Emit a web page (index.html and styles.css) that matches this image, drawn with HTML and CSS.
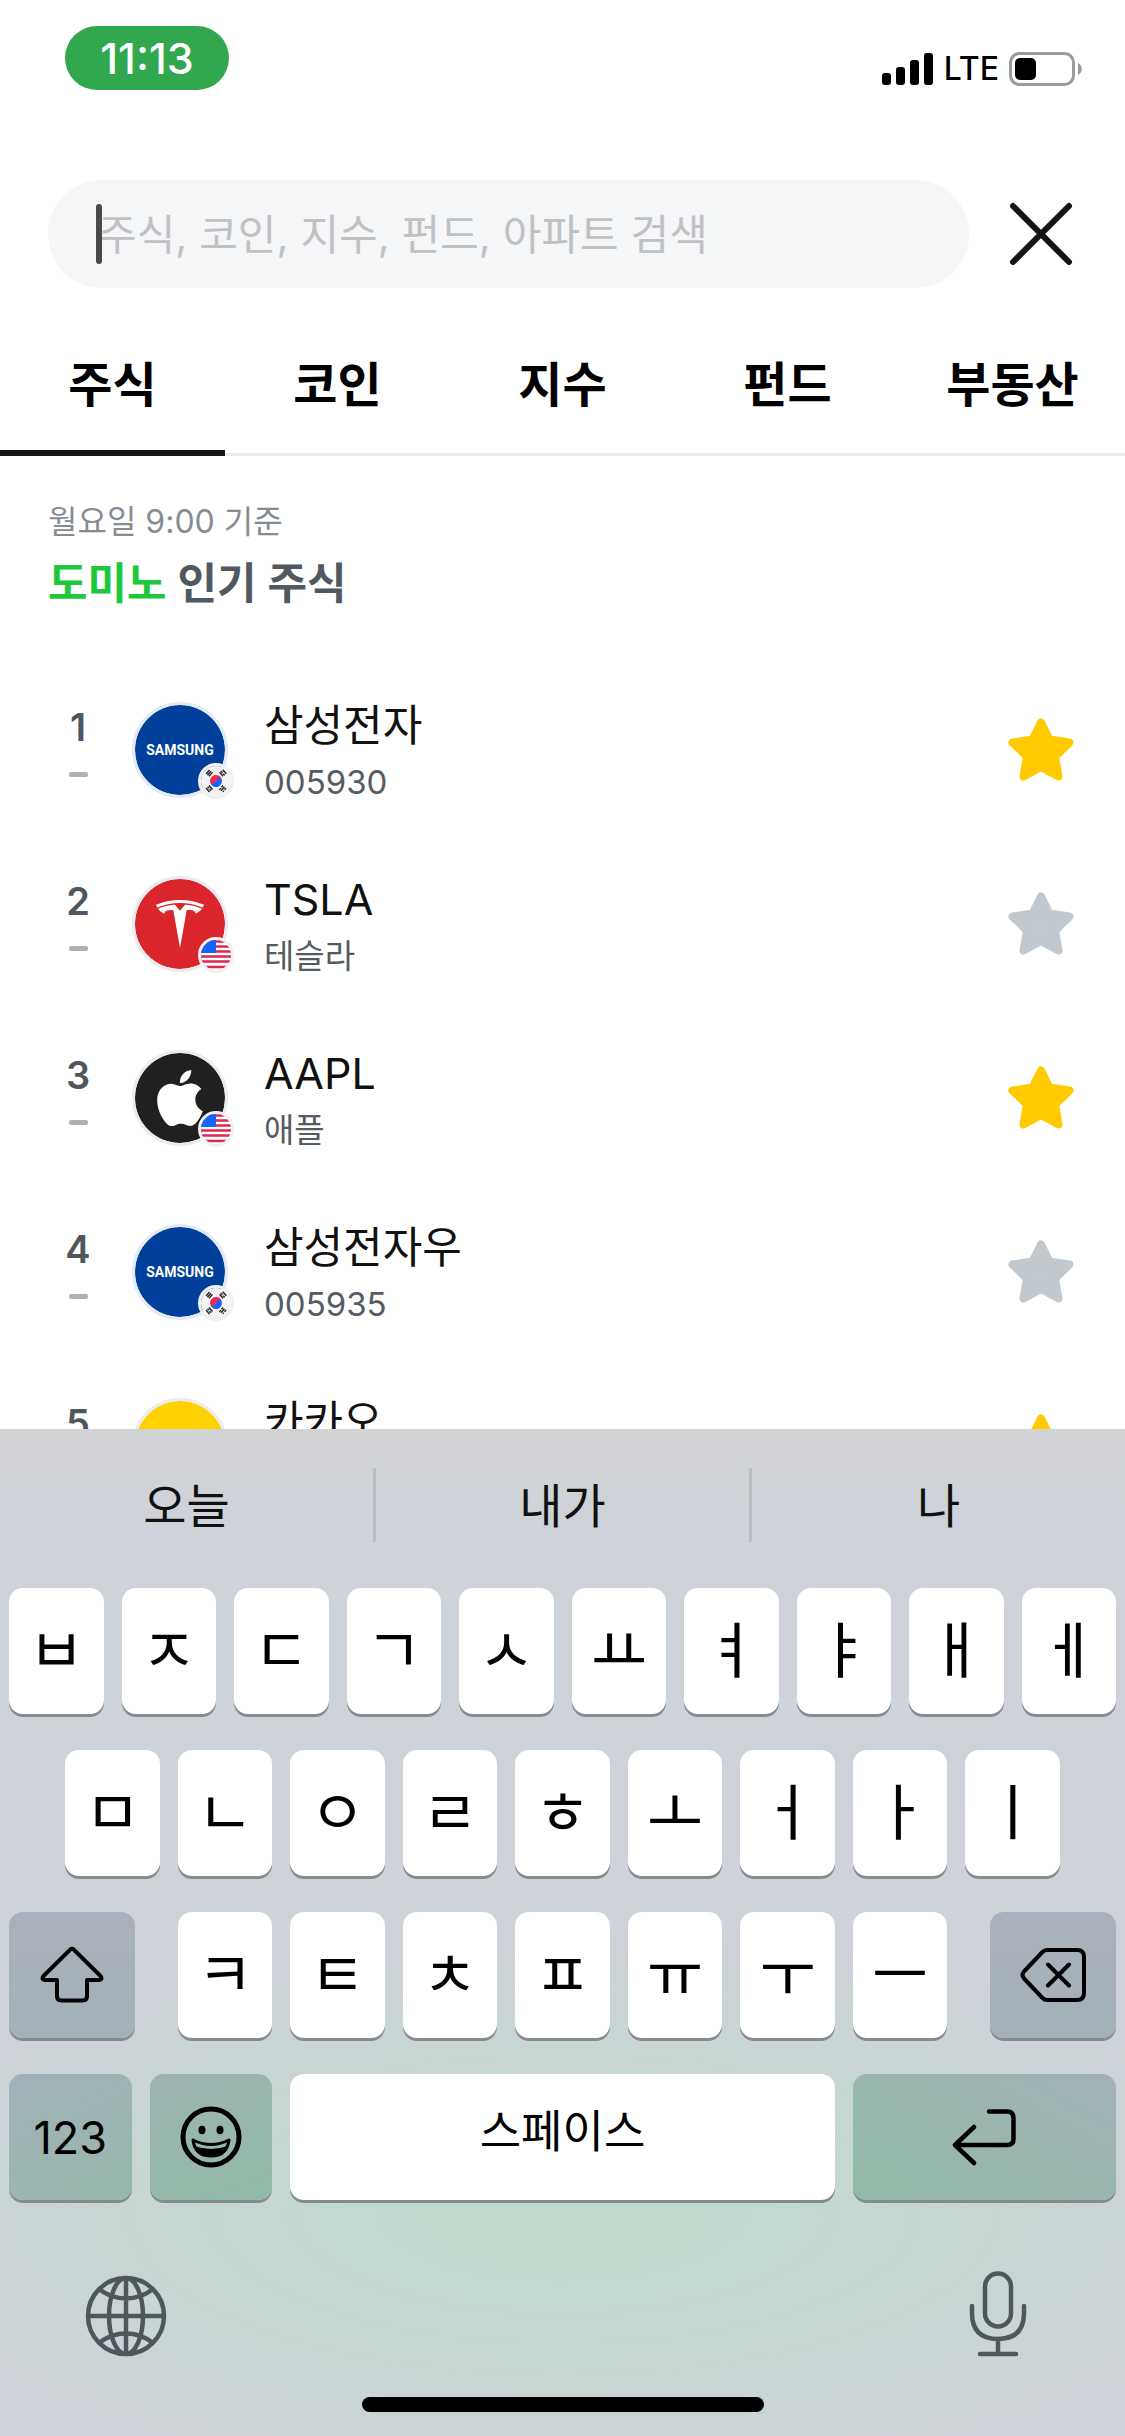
FILE: index.html
```html
<!DOCTYPE html>
<html lang="ko">
<head>
<meta charset="utf-8">
<meta name="viewport" content="width=device-width, initial-scale=1">
<title>검색</title>
<link rel="stylesheet" href="styles.css">
</head>
<body>
<svg class="defs" aria-hidden="true">
  <symbol id="star" viewBox="0 0 66 64">
    <path d="M33 4.500L41.500 21.500L61.500 24.500L47 38.500L50.500 58.500L33 49L15.500 58.500L19 38.500L4.500 24.500L24.500 21.500Z" fill="currentColor" stroke="currentColor" stroke-width="8" stroke-linejoin="round"/>
  </symbol>
  <symbol id="flag-kr" viewBox="0 0 30 30">
    <rect width="30" height="30" fill="#f4f4f4"/>
    <g transform="rotate(-20 15 15)">
      <path d="M9 15a6 6 0 0 1 12 0z" fill="#f0284a"/>
      <path d="M9 15a6 6 0 0 0 12 0z" fill="#1463ff"/>
      <circle cx="12" cy="15" r="2" fill="#f0284a"/>
      <circle cx="18" cy="15" r="2" fill="#1463ff"/>
    </g>
    <g stroke="#222" stroke-width="1.400">
      <path d="M5 8l3.500-4M6.500 9.200l3.500-4M8 10.400l3.500-4"/>
      <path d="M20 5l1.500 1.800M22.200 7.600l1.500 1.800M21.800 3.700l3.500 4M18.600 6.200l3.500 4"/>
      <path d="M5 22l3.500 4M8 19.500l3.500 4M6.500 20.700l1.500 1.700M8.600 23.100l1.500 1.700"/>
      <path d="M25 22l-1.500 1.800M22.800 24.600l-1 1.200M22 19.500l-1.500 1.800M19.800 22.100l-1.500 1.800M23.500 20.700l-3.500 4"/>
    </g>
  </symbol>
  <symbol id="flag-us" viewBox="0 0 30 30">
    <rect width="30" height="30" fill="#fff"/>
    <path d="M0 1.500h30M0 6.500h30M0 11.500h30M0 16.500h30M0 21.500h30M0 27h30" stroke="#e0264f" stroke-width="2.600"/>
    <rect width="15" height="13" fill="#1463ff"/>
  </symbol>
</svg>

<header class="status">
  <span class="clock">11:13</span>
  <div class="signals">
    <svg width="52" height="34" viewBox="0 0 52 34" aria-hidden="true">
      <rect x="0" y="21" width="9" height="12" rx="3"/><rect x="14" y="15" width="9" height="18" rx="3"/><rect x="28" y="8" width="9" height="25" rx="3"/><rect x="42" y="1" width="9" height="32" rx="3"/>
    </svg>
    <span class="network">LTE</span>
    <svg width="74" height="34" viewBox="0 0 74 34" aria-hidden="true">
      <rect x="1.500" y="1.500" width="63" height="31" rx="9" fill="none" stroke="#9b9b9b" stroke-width="3"/>
      <rect x="6" y="6" width="21" height="22" rx="5"/>
      <path d="M69 11c5 2 5 10 0 12z" fill="#9b9b9b"/>
    </svg>
  </div>
</header>

<form class="search" role="search">
  <div class="search-box">
    <input class="search-input" type="text" aria-label="검색어" placeholder="주식, 코인, 지수, 펀드, 아파트 검색">
    <span class="caret"></span>
  </div>
  <button class="close" type="button" aria-label="닫기">
    <svg width="64" height="64" viewBox="0 0 64 64"><path d="M4 4L60 60M60 4L4 60" stroke="#151515" stroke-width="6" stroke-linecap="round"/></svg>
  </button>
</form>

<nav class="tabs">
  <button class="tab active" type="button">주식</button>
  <button class="tab" type="button">코인</button>
  <button class="tab" type="button">지수</button>
  <button class="tab" type="button">펀드</button>
  <button class="tab" type="button">부동산</button>
</nav>

<main class="results">
  <p class="asof">월요일 9:00 기준</p>
  <h1 class="heading"><span class="brand">도미노</span> 인기 주식</h1>
  <ol class="stocks">
    <li class="stock">
      <div class="rank">1<span class="dash"></span></div>
      <div class="logo samsung">SAMSUNG<svg class="flag" aria-hidden="true"><use href="#flag-kr"/></svg></div>
      <div class="info"><span class="name">삼성전자</span><span class="code">005930</span></div>
      <button class="fav on" type="button" aria-label="관심 해제"><svg width="66" height="64"><use href="#star"/></svg></button>
    </li>
    <li class="stock">
      <div class="rank">2<span class="dash"></span></div>
      <div class="logo tesla">
        <svg width="48" height="48" viewBox="0 0 24 24" fill="#fff" aria-hidden="true"><path d="M12 5.362l2.475-3.026s4.245.09 8.471 2.054c-1.082 1.636-3.231 2.438-3.231 2.438-.146-1.439-1.154-1.790-4.354-1.790L12 24 8.619 5.034c-3.180 0-4.188.354-4.335 1.792 0 0-2.146-.795-3.229-2.430C5.280 2.431 9.525 2.340 9.525 2.340L12 5.362zM12 1.463c3.415-.030 7.326.528 11.328 2.280.535-.968.672-1.395.672-1.395C19.625.612 15.528.015 12 0 8.472.015 4.375.610 0 2.349c0 0 .195.525.672 1.396C4.674 1.989 8.585 1.435 12 1.463z"/></svg>
        <svg class="flag" aria-hidden="true"><use href="#flag-us"/></svg>
      </div>
      <div class="info"><span class="name">TSLA</span><span class="code">테슬라</span></div>
      <button class="fav" type="button" aria-label="관심 등록"><svg width="66" height="64"><use href="#star"/></svg></button>
    </li>
    <li class="stock">
      <div class="rank">3<span class="dash"></span></div>
      <div class="logo apple">
        <svg width="56" height="56" viewBox="0 0 24 24" fill="#fff" aria-hidden="true"><path d="M12.152 6.896c-.948 0-2.415-1.078-3.960-1.040-2.040.027-3.910 1.183-4.961 3.014-2.117 3.675-.546 9.103 1.519 12.090 1.013 1.454 2.208 3.090 3.792 3.039 1.520-.065 2.090-.987 3.935-.987 1.831 0 2.350.987 3.960.948 1.637-.026 2.676-1.480 3.676-2.948 1.156-1.688 1.636-3.325 1.662-3.415-.039-.013-3.182-1.221-3.220-4.857-.026-3.040 2.480-4.494 2.597-4.559-1.429-2.090-3.623-2.324-4.390-2.376-2-.156-3.675 1.090-4.610 1.090zM15.530 3.830c.843-1.012 1.400-2.427 1.245-3.830-1.207.052-2.662.805-3.532 1.818-.780.896-1.454 2.338-1.273 3.714 1.338.104 2.715-.688 3.559-1.701"/></svg>
        <svg class="flag" aria-hidden="true"><use href="#flag-us"/></svg>
      </div>
      <div class="info"><span class="name">AAPL</span><span class="code">애플</span></div>
      <button class="fav on" type="button" aria-label="관심 해제"><svg width="66" height="64"><use href="#star"/></svg></button>
    </li>
    <li class="stock">
      <div class="rank">4<span class="dash"></span></div>
      <div class="logo samsung">SAMSUNG<svg class="flag" aria-hidden="true"><use href="#flag-kr"/></svg></div>
      <div class="info"><span class="name">삼성전자우</span><span class="code">005935</span></div>
      <button class="fav" type="button" aria-label="관심 등록"><svg width="66" height="64"><use href="#star"/></svg></button>
    </li>
    <li class="stock">
      <div class="rank">5<span class="dash"></span></div>
      <div class="logo kakao"><svg class="flag" aria-hidden="true"><use href="#flag-kr"/></svg></div>
      <div class="info"><span class="name">카카오</span><span class="code">035720</span></div>
      <button class="fav on" type="button" aria-label="관심 해제"><svg width="66" height="64"><use href="#star"/></svg></button>
    </li>
  </ol>
</main>

<section class="keyboard" aria-label="키보드">
  <div class="suggestions">
    <button class="suggestion" type="button">오늘</button>
    <button class="suggestion" type="button">내가</button>
    <button class="suggestion" type="button">나</button>
  </div>
  <div class="keys">
    <button class="key" type="button">ㅂ</button>
    <button class="key" type="button">ㅈ</button>
    <button class="key" type="button">ㄷ</button>
    <button class="key" type="button">ㄱ</button>
    <button class="key" type="button">ㅅ</button>
    <button class="key" type="button">ㅛ</button>
    <button class="key" type="button">ㅕ</button>
    <button class="key" type="button">ㅑ</button>
    <button class="key" type="button">ㅐ</button>
    <button class="key" type="button">ㅔ</button>

    <button class="key indent" type="button">ㅁ</button>
    <button class="key" type="button">ㄴ</button>
    <button class="key" type="button">ㅇ</button>
    <button class="key" type="button">ㄹ</button>
    <button class="key" type="button">ㅎ</button>
    <button class="key" type="button">ㅗ</button>
    <button class="key" type="button">ㅓ</button>
    <button class="key" type="button">ㅏ</button>
    <button class="key" type="button">ㅣ</button>

    <button class="key shift" type="button" aria-label="시프트">
      <svg width="66" height="58" viewBox="0 0 66 58"><path d="M31.200 3.600Q33 2 34.800 3.600L61.500 30Q64 33.500 60 34H48V50Q48 54.500 43.500 54.500H22.500Q18 54.500 18 50V34H6Q2 33.500 4.500 30Z" fill="none" stroke="#000" stroke-width="4" stroke-linejoin="round"/></svg>
    </button>
    <button class="key" type="button">ㅋ</button>
    <button class="key" type="button">ㅌ</button>
    <button class="key" type="button">ㅊ</button>
    <button class="key" type="button">ㅍ</button>
    <button class="key" type="button">ㅠ</button>
    <button class="key" type="button">ㅜ</button>
    <button class="key" type="button">ㅡ</button>
    <button class="key delete" type="button" aria-label="지우기">
      <svg width="66" height="56" viewBox="0 0 66 56" fill="none" stroke="#000" stroke-width="4" stroke-linecap="round" stroke-linejoin="round"><path d="M27 3H57Q64 3 64 10V46Q64 53 57 53H27Q24.500 53 22.500 51L4 31.500Q1 28 4 24.500L22.500 5Q24.500 3 27 3ZM28 17.500L49 38.500M49 17.500L28 38.500"/></svg>
    </button>

    <div class="pair">
      <button class="key numbers" type="button">123</button>
      <button class="key emoji" type="button" aria-label="이모티콘">
        <svg width="62" height="62" viewBox="0 0 62 62"><circle cx="31" cy="31" r="28" fill="none" stroke="#000" stroke-width="5"/><ellipse cx="22" cy="24" rx="3.500" ry="4.200"/><ellipse cx="40" cy="24" rx="3.500" ry="4.200"/><path d="M13 34Q31 43 49 34Q47 50 31 50Q15 50 13 34Z" fill="none" stroke="#000" stroke-width="3" stroke-linejoin="round"/><path d="M14.500 40Q31 46 47.500 40Q43 50 31 50Q19 50 14.500 40Z"/></svg>
      </button>
    </div>
    <button class="key space" type="button">스페이스</button>
    <button class="key return" type="button" aria-label="리턴">
      <svg width="66" height="58" viewBox="0 0 66 58" fill="none" stroke="#000" stroke-width="4.500" stroke-linecap="round" stroke-linejoin="round"><path d="M38 3.500H56Q62.500 3.500 62.500 10V31Q62.500 37 56 37H4M23 19L4 37L23 55"/></svg>
    </button>
  </div>
  <div class="tools">
    <button class="tool" type="button" aria-label="언어 변경">
      <svg width="82" height="82" viewBox="0 0 82 82" fill="none" stroke="#4f575c" stroke-width="4.500"><circle cx="41" cy="41" r="38"/><ellipse cx="41" cy="41" rx="17" ry="38"/><path d="M41 2V80M2 41H80M14 14Q26 23.500 41 23.500Q56 23.500 68 14M14 68Q26 58.500 41 58.500Q56 58.500 68 68"/></svg>
    </button>
    <button class="tool" type="button" aria-label="음성 입력">
      <svg width="58" height="86" viewBox="0 0 58 86" fill="none" stroke="#4f575c" stroke-width="4.500" stroke-linecap="round"><rect x="16" y="2.500" width="26" height="53" rx="13"/><path d="M3 35V42Q3 68 29 68Q55 68 55 42V35M29 68V83M11 83H47"/></svg>
    </button>
  </div>
  <div class="home"></div>
</section>
</body>
</html>
```
FILE: styles.css
```css
* {
  box-sizing: border-box;
}

body {
  margin: 0;
  height: 100vh;
  display: flex;
  flex-direction: column;
  background: #fff;
  color: #111;
  font-family: Inter, "Noto Sans CJK KR", sans-serif;
}

button {
  margin: 0;
  padding: 0;
  border: 0;
  background: none;
  color: inherit;
  font: inherit;
}

svg {
  display: block;
  flex: none;
}

.defs {
  position: absolute;
  width: 0;
  height: 0;
}

/* Status bar */
.status {
  display: flex;
  justify-content: space-between;
  padding: 26px 42px 0 65px;
}

.clock {
  width: 164px;
  border-radius: 32px;
  background: #31a84d;
  color: #fff;
  font-size: 43px;
  font-weight: 500;
  line-height: 64px;
  text-align: center;
}

.signals {
  display: flex;
  align-items: center;
  gap: 10px;
  padding-top: 22px;
  color: #000;
}

.network {
  font-size: 32px;
  font-weight: 500;
  line-height: 42px;
}

/* Search */
.search {
  display: flex;
  align-items: center;
  gap: 40px;
  padding: 90px 52px 0 48px;
}

.search-box {
  position: relative;
  flex: 1;
}

.search-input {
  display: block;
  width: 100%;
  height: 108px;
  padding: 0 50px;
  border: 0;
  border-radius: 54px;
  outline: 0;
  background: #f4f6f8;
  color: #111;
  font: inherit;
  font-size: 42px;
}

.search-input::placeholder {
  color: #c0c1c3;
  opacity: 1;
}

.caret {
  position: absolute;
  top: 24px;
  left: 48px;
  width: 6px;
  height: 60px;
  border-radius: 3px;
  background: #4a4a4a;
}

/* Tabs */
.tabs {
  display: flex;
  margin-top: 24px;
  box-shadow: inset 0 -3px #ededee;
}

.tab {
  flex: 1;
  height: 144px;
  padding-bottom: 6px;
  color: #000;
  font-size: 48px;
  font-weight: 600;
}

.tab.active {
  box-shadow: inset 0 -6px #151515;
}

/* Results */
.results {
  flex: 1 1 0;
  min-height: 0;
  overflow: hidden;
  padding-top: 44px;
}

.asof {
  margin: 0;
  padding: 0 48px;
  color: #868c94;
  font-size: 32px;
  line-height: 44px;
}

.heading {
  margin: 9px 0 50px;
  padding: 0 48px;
  color: #505860;
  font-size: 43px;
  font-weight: 600;
  line-height: 60px;
}

.brand {
  color: #1ec83c;
}

.stocks {
  margin: 0;
  padding: 0;
  list-style: none;
}

.stock {
  display: flex;
  align-items: center;
  height: 174px;
  padding: 0 51px 0 48px;
}

.rank {
  display: flex;
  flex-direction: column;
  align-items: center;
  gap: 23px;
  width: 60px;
  padding-bottom: 18px;
  color: #50565e;
  font-size: 38px;
  font-weight: 600;
  line-height: 44px;
}

.dash {
  width: 19px;
  height: 5px;
  border-radius: 2px;
  background: #b0b1b3;
}

.logo {
  position: relative;
  display: flex;
  flex: none;
  align-items: center;
  justify-content: center;
  width: 96px;
  height: 96px;
  margin: 0 36px 0 24px;
  border: 3px solid #ececee;
  border-radius: 50%;
}

.samsung {
  border-color: #e4eaf3;
  background: #00409a;
  background-clip: padding-box;
  color: #fff;
  font-family: Roboto, "Liberation Sans", sans-serif;
  font-size: 14px;
  font-weight: 700;
}

.tesla {
  background: #d9252b;
  background-clip: padding-box;
}

.apple {
  background: #202020;
  background-clip: padding-box;
}

.kakao {
  background: #ffd100;
  background-clip: padding-box;
}

.flag {
  position: absolute;
  top: 58px;
  left: 63px;
  width: 36px;
  height: 36px;
  border: 3px solid #f1f1f2;
  border-radius: 50%;
}

.info {
  display: flex;
  flex: 1;
  flex-direction: column;
  gap: 6px;
}

.name {
  font-size: 43px;
  line-height: 58px;
}

.code {
  color: #565b62;
  font-size: 33px;
  line-height: 44px;
}

.fav {
  color: #c1c8ce;
}

.fav.on {
  color: #ffcb00;
}

/* Keyboard */
.keyboard {
  flex: none;
  padding-bottom: 24px;
  background:
    radial-gradient(ellipse 68% 28% at 50% 78%, #c2d9cd 0%, rgba(194, 217, 206, 0.900) 30%, rgba(197, 215, 209, 0) 100%),
    linear-gradient(#d2d3d5 0%, #ced2d9 10%, #cfd2d9 100%);
}

.suggestions {
  display: flex;
  padding: 39px 0 46px;
}

.suggestion {
  flex: 1;
  height: 74px;
  padding-bottom: 8px;
  font-size: 47px;
}

.suggestion + .suggestion {
  border-left: 3px solid #b9bcc1;
}

.keys {
  display: grid;
  grid-template-columns: repeat(20, minmax(0, 1fr));
  gap: 36px 18px;
  padding: 0 9px;
}

.key {
  display: flex;
  grid-column: span 2;
  align-items: center;
  justify-content: center;
  height: 126px;
  padding-bottom: 10px;
  border-radius: 14px;
  background: #fff;
  box-shadow: 0 3px #888b8e;
  color: #000;
  font-size: 61px;
}

.key.indent {
  grid-column: 2 / span 2;
}

.key.shift {
  grid-column: 1 / span 3;
  width: 126px;
  padding: 0;
  background: linear-gradient(#aab0bb, #a3b1b7);
}

.key.delete {
  grid-column: 18 / span 3;
  justify-self: end;
  width: 126px;
  padding: 0;
  background: linear-gradient(#aab0bb, #a3b1b7);
}

.pair {
  display: flex;
  grid-column: span 5;
  gap: 18px;
}

.pair .key {
  flex: 1;
  padding: 0;
}

.key.numbers {
  background: linear-gradient(155deg, #a3b1b9, #96b7aa);
  font-size: 45px;
}

.key.emoji {
  background: linear-gradient(160deg, #9fb3b1, #8fbaa6);
}

.key.space {
  grid-column: span 10;
  padding-bottom: 18px;
  font-size: 45px;
}

.key.return {
  grid-column: span 5;
  padding: 0;
  background: linear-gradient(210deg, #a3b1b8, #9bb5ae 45%, #90baa7);
}

.tools {
  display: flex;
  align-items: flex-end;
  justify-content: space-between;
  padding: 71px 98px 40px 85px;
}

.home {
  width: 402px;
  height: 15px;
  margin: 0 auto;
  border-radius: 8px;
  background: #000;
}
```
